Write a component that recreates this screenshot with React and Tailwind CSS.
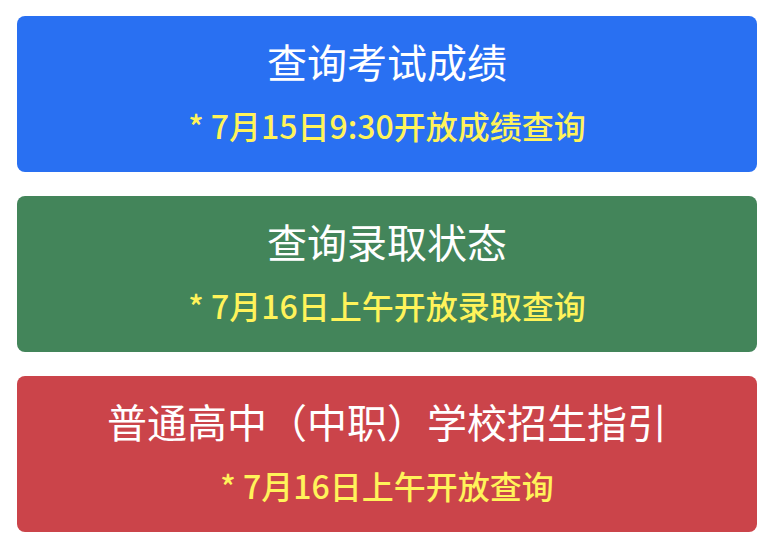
const cards = [
  { title: '查询考试成绩', note: '* 7月15日9:30开放成绩查询', bg: 'bg-[#2970f2]' },
  { title: '查询录取状态', note: '* 7月16日上午开放录取查询', bg: 'bg-[#43855a]' },
  { title: '普通高中（中职）学校招生指引', note: '* 7月16日上午开放查询', bg: 'bg-[#cb444a]' },
];

export default function App() {
  return (
    <div
      className="w-[782px] h-[544px] bg-white pt-4 pl-[17px]"
      style={{ fontFamily: '"Noto Sans CJK SC", "Noto Sans", sans-serif' }}
    >
      <div className="flex flex-col gap-6 w-[740px]">
        {cards.map((c) => (
          <button
            key={c.title}
            className={`${c.bg} h-[156px] pb-[6px] rounded-lg flex flex-col items-center justify-center gap-3`}
          >
            <span className="text-white text-[40px] leading-[56px]">{c.title}</span>
            <span className="text-[#fff35a] text-[32px] leading-[48px] font-medium">{c.note}</span>
          </button>
        ))}
      </div>
    </div>
  );
}
